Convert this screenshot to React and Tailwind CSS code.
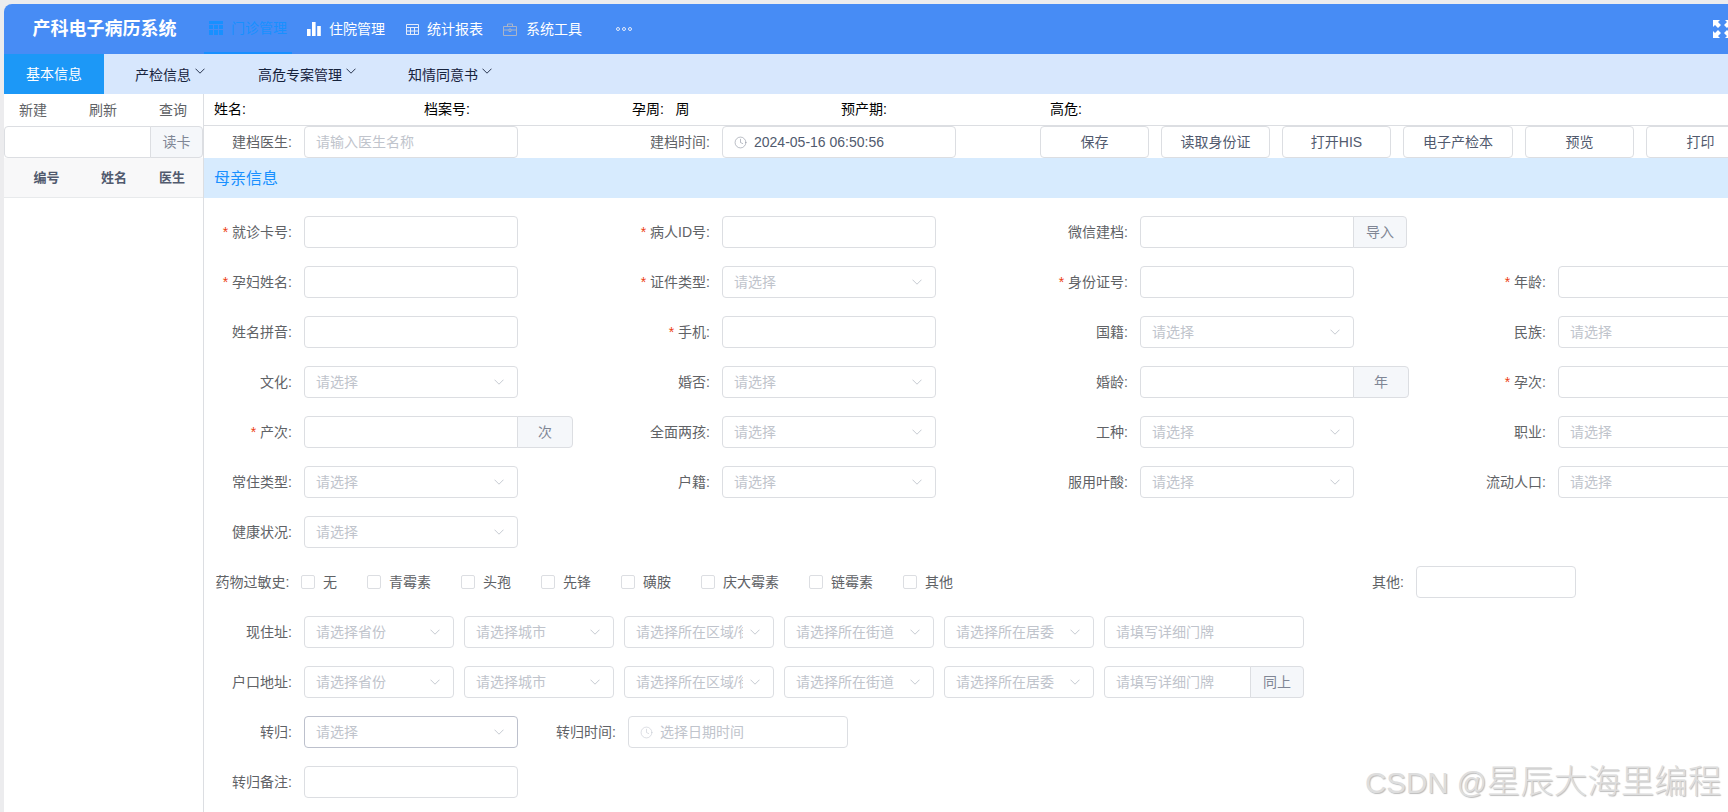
import { Clock } from 'lucide-react';

const FONT = '[font-family:"Liberation_Sans","Noto_Sans_CJK_SC",sans-serif]';

const Arrow = ({ className = '' }) => (
  <svg viewBox="0 0 10 6" className={`w-[10px] h-[6px] shrink-0 ${className}`} fill="none" stroke="currentColor" strokeWidth="0.9">
    <path d="M0.5 0.7 L5 5.2 L9.5 0.7" />
  </svg>
);

const GridIcon = () => (
  <svg viewBox="0 0 14 14" className="w-[14px] h-[14px] text-[#1890ff]" fill="currentColor">
    <rect x="0" y="0" width="14" height="3" />
    <rect x="0" y="4" width="4" height="4" />
    <rect x="5" y="4" width="4" height="4" />
    <rect x="10" y="4" width="4" height="4" />
    <rect x="0" y="9" width="4" height="5" />
    <rect x="5" y="9" width="4" height="5" />
    <rect x="10" y="9" width="4" height="5" />
  </svg>
);

const BarsIcon = () => (
  <svg viewBox="0 0 14 14" className="w-[14px] h-[14px] text-white" fill="currentColor">
    <rect x="0" y="7" width="3.6" height="7" />
    <rect x="5" y="0" width="3.6" height="14" />
    <rect x="10.2" y="4" width="3.6" height="10" />
  </svg>
);

const TableIcon = () => (
  <svg viewBox="0 0 13 13" className="w-[13px] h-[13px] text-[#e3ebfb]" fill="none" stroke="currentColor" strokeWidth="1">
    <path d="M0.5 1.5 H12.5 V11.5 H0.5 Z" />
    <path d="M0.5 4.5 H12.5 M0.5 8 H12.5 M4.5 4.5 V11.5 M8.5 4.5 V11.5" />
  </svg>
);

const CaseIcon = () => (
  <svg viewBox="0 0 14 13" className="w-[14px] h-[13px] text-[#a9b4c8]" fill="none" stroke="currentColor" strokeWidth="1">
    <path d="M0.5 3.5 H13.5 V12.5 H0.5 Z" />
    <path d="M4.5 3.5 V1 H9.5 V3.5 M0.5 7 H6 M8 7 H13.5 M6 6 H8 V8.5 H6 Z" />
  </svg>
);

const ExpandIcon = () => (
  <svg viewBox="0 0 19 18" className="w-[19px] h-[18px] shrink-0 text-white" fill="currentColor">
    <path d="M0 0 H7 L5 2 L8 5 L5 8 L2 5 L0 7 Z" />
    <path d="M19 0 H12 L14 2 L11 5 L14 8 L17 5 L19 7 Z" />
    <path d="M0 18 H7 L5 16 L8 13 L5 10 L2 13 L0 11 Z" />
    <path d="M19 18 H12 L14 16 L11 13 L14 10 L17 13 L19 11 Z" />
  </svg>
);

const Box = ({ className = '', border = 'border-[#dcdee2]', children }) => (
  <div className={`h-8 border ${border} rounded-[4px] bg-white flex items-center overflow-hidden ${className}`}>
    {children}
  </div>
);

const Select = ({ text = '请选择', width = 'w-[214px]', border }) => (
  <Box border={border} className={`${width} pl-[11px] pr-[13px] text-[#c0c4cc]`}>
    <span className="flex-1 min-w-0 overflow-hidden whitespace-nowrap">{text}</span>
    <Arrow className="ml-[7px] -mt-px text-[#c0c4cc]" />
  </Box>
);

const Addon = ({ text, width }) => (
  <div className={`flex items-center justify-center h-8 -ml-px border border-[#dcdee2] rounded-r-[4px] bg-[#f5f7fa] text-[#808695] ${width}`}>
    {text}
  </div>
);

const Input = ({ append, appendWidth }) => (
  <div className="flex">
    <Box className={`w-[214px] ${append ? 'rounded-r-none' : ''}`} />
    {append && <Addon text={append} width={appendWidth} />}
  </div>
);

const Field = ({ label, required, width = 'w-[418px]', labelWidth = 'w-[100px]', children }) => (
  <div className={`flex items-center shrink-0 ${width}`}>
    <label className={`${labelWidth} pr-3 text-right whitespace-nowrap text-[#606266] shrink-0`}>
      {required && <span className="text-[#ed4014] mr-1">*</span>}
      {label}:
    </label>
    {children}
  </div>
);

const Row = ({ children, className = '' }) => (
  <div className={`flex items-center h-8 mb-[18px] ${className}`}>{children}</div>
);

const navItems = [
  { text: '门诊管理', icon: <GridIcon />, box: 'w-[88px] pl-[5px] border-b-2 border-[#1890ff] text-[#1890ff]', gap: 'gap-[8px]' },
  { text: '住院管理', icon: <BarsIcon />, box: 'ml-[15px] text-white', gap: 'gap-2' },
  { text: '统计报表', icon: <TableIcon />, box: 'ml-[21px] text-white', gap: 'gap-[8px]' },
  { text: '系统工具', icon: <CaseIcon />, box: 'ml-[20px] text-white', gap: 'gap-[9px]' },
];

const subItems = [
  { text: '产检信息', width: 'w-[127px]', pad: 'pl-[31px]' },
  { text: '高危专案管理', width: 'w-[177px]', pad: 'pl-[27px]' },
  { text: '知情同意书', width: 'w-[120px]', pad: 'pl-0' },
];

const drugs = ['无', '青霉素', '头孢', '先锋', '磺胺', '庆大霉素', '链霉素', '其他'];
const buttons = ['保存', '读取身份证', '打开HIS', '电子产检本', '预览', '打印'];
const addrSelects = [
  '请选择省份',
  '请选择城市',
  '请选择所在区域/街道',
  '请选择所在街道',
  '请选择所在居委',
];

const Address = ({ label, same }) => (
  <Row>
    <Field label={label} width="w-[100px]"><span /></Field>
    <div className="flex gap-[10px]">
      {addrSelects.map((t) => (
        <Select key={t} text={t} width="w-[150px]" />
      ))}
      <div className="flex">
        <Box className={`${same ? 'w-[147px] rounded-r-none' : 'w-[200px]'} px-[11px] text-[#c0c4cc]`}>请填写详细门牌</Box>
        {same && <Addon text="同上" width="w-[54px]" />}
      </div>
    </div>
  </Row>
);

export default function App() {
  return (
    <div className={`relative w-[1728px] h-[812px] overflow-hidden bg-[#ececee] pt-1 pl-1 text-[14px] ${FONT}`}>
      <header className="h-[50px] rounded-tl-lg bg-[#478cf5] flex items-start overflow-hidden">
        <div className="w-[200px] h-full flex items-center pl-[28.5px] text-[18px] font-bold text-white">产科电子病历系统</div>
        {navItems.map((n) => (
          <div key={n.text} className={`h-[50px] flex items-center ${n.gap} ${n.box}`}>
            {n.icon}
            <span>{n.text}</span>
          </div>
        ))}
        <div className="h-full ml-[34px] flex items-center gap-[2px]">
          <span className="w-1 h-1 rounded-full border border-[#e3ebfb]" />
          <span className="w-1 h-1 rounded-full border border-[#e3ebfb]" />
          <span className="w-1 h-1 rounded-full border border-[#e3ebfb]" />
        </div>
        <div className="h-full ml-auto -mr-[4px] flex items-center">
          <ExpandIcon />
        </div>
      </header>

      <nav className="h-10 bg-[#d7e7fd] flex items-center text-[#17233d]">
        <div className="w-[100px] h-full flex items-center justify-center bg-[#1c98f7] text-white">基本信息</div>
        {subItems.map((s) => (
          <div key={s.text} className={`h-full flex items-start pt-[11px] ${s.width} ${s.pad}`}>
            <span>{s.text}</span>
            <Arrow className="ml-[4px] mt-[3px] w-[9px] text-[#17233d]" />
          </div>
        ))}
      </nav>

      <div className="flex h-[718px] bg-white">
        <aside className="w-[200px] shrink-0 border-r border-[#dcdee2]">
          <div className="h-8 flex items-center text-[#606266] pl-[15px] gap-[42px]">
            <span>新建</span>
            <span>刷新</span>
            <span>查询</span>
          </div>
          <div className="flex">
            <Box className="w-[147px] rounded-r-none" />
            <Addon text="读卡" width="w-[53px]" />
          </div>
          <div className="h-10 bg-[#f8f8f9] border-b border-[#e8eaec] flex items-center text-[13px] font-bold text-[#515a6e] pl-[29.5px]">
            <span className="w-[67.5px]">编号</span>
            <span className="w-[58px]">姓名</span>
            <span>医生</span>
          </div>
        </aside>

        <main className="flex-1 min-w-0">
          <div className="h-8 border-b border-[#dcdee2] flex items-center pl-[10px] text-black">
            <span className="w-[210px]">姓名:</span>
            <span className="w-[208px]">档案号:</span>
            <span className="w-[209px]">孕周:&nbsp;&nbsp;&nbsp;周</span>
            <span className="w-[209px]">预产期:</span>
            <span>高危:</span>
          </div>
          <div className="flex items-center h-8">
            <Field label="建档医生">
              <Box className="w-[214px] px-[11px] text-[#c0c4cc]">请输入医生名称</Box>
            </Field>
            <Field label="建档时间">
              <Box className="w-[234px] px-[11px] gap-[7px] text-[#515a6e]">
                <Clock size={13} strokeWidth={1} className="text-[#808695]" />
                <span>2024-05-16 06:50:56</span>
              </Box>
            </Field>
            <div className="flex gap-3 text-[#515a6e]">
              {buttons.map((b) => (
                <Box key={b} className={`${b === '电子产检本' ? 'w-[110px]' : 'w-[109px]'} justify-center shrink-0`}>{b}</Box>
              ))}
            </div>
          </div>
          <div className="h-10 bg-[#d7ebfe] flex items-center pl-[10px] pt-[2px] text-[16px] text-[#1890ff]">母亲信息</div>

          <div className="pt-[18px]">
            <Row>
              <Field label="就诊卡号" required><Input /></Field>
              <Field label="病人ID号" required><Input /></Field>
              <Field label="微信建档"><Input append="导入" appendWidth="w-[54px]" /></Field>
            </Row>
            <Row>
              <Field label="孕妇姓名" required><Input /></Field>
              <Field label="证件类型" required><Select /></Field>
              <Field label="身份证号" required><Input /></Field>
              <Field label="年龄" required><Input /></Field>
            </Row>
            <Row>
              <Field label="姓名拼音"><Input /></Field>
              <Field label="手机" required><Input /></Field>
              <Field label="国籍"><Select /></Field>
              <Field label="民族"><Select /></Field>
            </Row>
            <Row>
              <Field label="文化"><Select /></Field>
              <Field label="婚否"><Select /></Field>
              <Field label="婚龄"><Input append="年" appendWidth="w-[56px]" /></Field>
              <Field label="孕次" required><Input /></Field>
            </Row>
            <Row>
              <Field label="产次" required><Input append="次" appendWidth="w-[56px]" /></Field>
              <Field label="全面两孩"><Select /></Field>
              <Field label="工种"><Select /></Field>
              <Field label="职业"><Select /></Field>
            </Row>
            <Row>
              <Field label="常住类型"><Select /></Field>
              <Field label="户籍"><Select /></Field>
              <Field label="服用叶酸"><Select /></Field>
              <Field label="流动人口"><Select /></Field>
            </Row>
            <Row>
              <Field label="健康状况"><Select /></Field>
            </Row>
            <Row>
              <div className="pl-[11.5px] w-[97px] shrink-0 whitespace-nowrap text-[#606266]">药物过敏史:</div>
              <div className="flex gap-[30px] text-[#606266]">
                {drugs.map((d) => (
                  <label key={d} className="flex items-center gap-2 whitespace-nowrap">
                    <span className="w-[14px] h-[14px] border border-[#dcdee2] rounded-[2px] bg-white" />
                    {d}
                  </label>
                ))}
              </div>
              <div className="ml-[419px] flex items-center gap-3">
                <span className="text-[#606266]">其他:</span>
                <Box className="w-[160px]" />
              </div>
            </Row>
            <Address label="现住址" />
            <Address label="户口地址" same />
            <Row>
              <Field label="转归" width="w-[314px]">
                <Select border="border-[#bcc0cc]" />
              </Field>
              <Field label="转归时间" width="w-[330px]" labelWidth="w-[110px]">
                <Box className="w-[220px] px-[11px] gap-[7px] text-[#c0c4cc]">
                  <Clock size={13} strokeWidth={1} />
                  <span>选择日期时间</span>
                </Box>
              </Field>
            </Row>
            <Row>
              <Field label="转归备注"><Input /></Field>
            </Row>
          </div>
        </main>
      </div>

      <div className="absolute left-[1365px] top-[764px] whitespace-nowrap text-[33.5px] leading-[36px] font-light text-[#dedede] [text-shadow:1px_1px_1px_#bcbcbc] pointer-events-none">
        <span className="text-[29.5px]">CSDN @</span>星辰大海里编程
      </div>
    </div>
  );
}
